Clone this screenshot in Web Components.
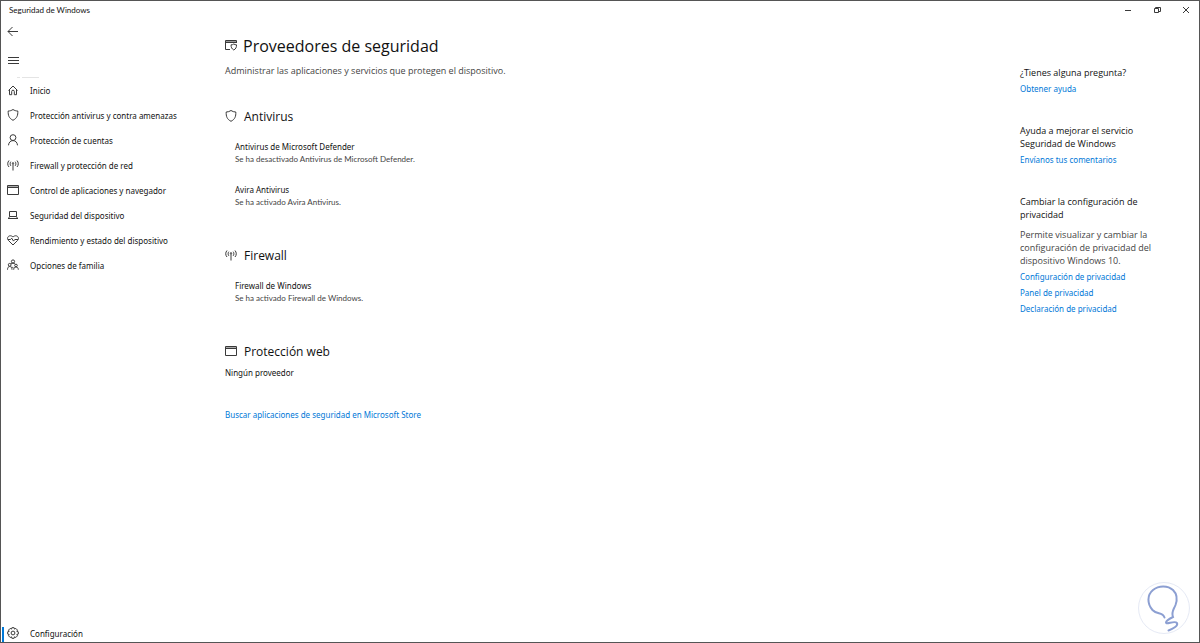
<!DOCTYPE html>
<html lang="es">
<head>
<meta charset="utf-8">
<meta name="viewport" content="width=device-width">
<title>Seguridad de Windows</title>
<style>
  html { height: 100%; }
  body {
    margin: 0; min-height: 100%; display: flex;
    background: #fff; color: #111;
    --ui: "Noto Sans", "Open Sans", sans-serif;
    --text: "Open Sans", "Noto Sans", sans-serif;
    --small: Lato, "Open Sans", sans-serif;
    --link: #0078d7; --muted: #444;
    font: 8px/12px var(--ui);
  }
</style>
</head>
<body>
<security-app></security-app>
<script>
const ICONS = {
  home: '<path d="M2.500 7.500 7 3l4.500 4.500M3.500 6.700v5h2.200V8.500a1.300 1.300 0 0 1 2.600 0v3.200h2.200v-5"/>',
  shield: '<path d="M7 1.500c1.500 1 3 1.500 4.800 1.500.2 4.300-.7 7.200-4.800 9.300C2.900 10.200 2 7.300 2.200 3 4 3 5.500 2.500 7 1.500z"/>',
  user: '<circle cx="7" cy="4.600" r="2.900"/><path d="M2.500 12.300c.2-2.700 1.800-4.700 4.500-4.700s4.300 2 4.500 4.700"/>',
  signal: '<path d="M3 2.500c-1.700 1.900-1.700 4.600 0 6.500M4.800 3.700c-.9 1.300-.9 2.800 0 4.100M11 2.500c1.700 1.900 1.700 4.600 0 6.500M9.200 3.700c.9 1.300.9 2.800 0 4.100M7 6v6.500"/><circle cx="7" cy="5.300" r=".7"/>',
  window: '<path d="M1.500 2.500h11v9h-11zM1.500 4.500h11"/><path d="M2 3.500h10" stroke="#aaa"/>',
  laptop: '<path d="M3.500 3.500h7v5h-7zM2 10.500h10M3.500 8.500l-1 2M10.500 8.500l1 2"/>',
  heart: '<path d="M7 12 2.300 7.300C-.1 4.500 3.700.8 7 4c3.300-3.200 7.100.5 4.700 3.300zM2 6.500h2.500l1.200-1.300 1.800 2.900 1.300-1.600H12"/>',
  family: '<circle cx="7" cy="3.500" r="1.600"/><circle cx="3.700" cy="6.800" r="1.400"/><circle cx="10" cy="7.500" r="1.300"/><path d="M1.500 11.700c0-2 .8-3.200 2.200-3.200S6 9.700 6 11.700M7.700 11.700c0-1.800.9-2.700 2.300-2.700s2.300.9 2.300 2.700M4.800 5.900C5.800 4.900 8.200 4.900 9 6M6 8.700l1.500 1.500"/>',
  gear: '<circle cx="7" cy="7" r="1.900"/><path d="m5.900 1.700 2.200 0 .4 1.400 1.300-.7 1.700 1.700-.7 1.300 1.500.4v2.300l-1.500.4.7 1.300-1.700 1.700-1.300-.7-.4 1.500H5.900l-.4-1.500-1.300.7-1.700-1.700.7-1.300-1.500-.4V5.800l1.500-.4-.7-1.300 1.700-1.700 1.300.7z"/>',
  provider: '<path d="M6 11.500H1.500v-9h11V5M1.500 4.500h11"/><path d="M2 3.500h10" stroke="#999"/><path d="M9.800 6c.8.600 1.700.8 2.700.8.100 2.500-.6 4-2.700 5.200C7.700 10.800 7 9.300 7.100 6.800c1 0 1.900-.2 2.700-.8z"/>',
  back: '<path d="M12 7.500H2M6.500 3 2 7.500 6.500 12"/>',
  menu: '<path d="M2 4.500h11M2 7.500h11M2 10.500h11"/>',
  minimize: '<path d="M4 7.500h6"/>',
  restore: '<path d="M4.500 5.500h4v4h-4zM5.500 5.500v-1h5v4h-2"/>',
  close: '<path d="m4 4 6 6M10 4l-6 6"/>'
};

function define(name, css, html) {
  customElements.define(name, class extends HTMLElement {
    constructor() {
      super();
      const t = document.createElement('template');
      t.innerHTML = `<style>*{box-sizing:border-box}${css}</style>${typeof html === 'function' ? html(this) : html}`;
      this.attachShadow({ mode: 'open' }).append(t.content.cloneNode(true));
    }
  });
}

define('ui-icon',
  ':host{display:block;flex:none;width:13px;height:14px}svg{display:block;width:100%;height:100%;fill:none;stroke:#3a3a3a;stroke-width:1}',
  el => `<svg viewBox="1 1 13 14" aria-hidden="true">${ICONS[el.getAttribute('name')]}</svg>`);

define('icon-button',
  ':host{display:block}button{display:flex;align-items:center;justify-content:center;width:100%;height:100%;padding:var(--button-padding,0);border:0;background:none}',
  el => `<button type="button" aria-label="${el.getAttribute('label')}"><ui-icon name="${el.getAttribute('icon')}"></ui-icon></button>`);

define('text-link',
  ':host{display:block}a{color:var(--link);text-decoration:none}',
  '<a href="#"><slot></slot></a>');

define('title-bar', `
  :host{display:flex;align-items:center;justify-content:space-between;height:18px;padding-left:8px;font-family:var(--small)}
  div{display:flex;height:100%;--button-padding:2px 0 0 4px}
  icon-button{width:29px}`,
  `<span>Seguridad de Windows</span>
   <div><icon-button icon="minimize" label="Minimizar"></icon-button><icon-button icon="restore" label="Restaurar"></icon-button><icon-button icon="close" label="Cerrar"></icon-button></div>`);

define('nav-item', `
  :host{display:block;height:25px}
  :host([current]){height:16px}
  a{display:flex;align-items:center;gap:10px;height:100%;padding-left:6px;color:inherit;text-decoration:none}
  :host([current]) a{padding-left:1px}
  :host([current]) a::before{content:"";width:2px;height:15px;margin-right:-7px;background:var(--link)}`,
  el => `<a href="#"${el.hasAttribute('current') ? ' aria-current="page"' : ''}><ui-icon name="${el.getAttribute('icon')}"></ui-icon><slot></slot></a>`);

define('side-nav', `
  :host{display:flex;flex-direction:column}
  icon-button{width:25px;height:26px}
  icon-button+icon-button{margin-top:3px}
  svg{display:block;width:24px;height:2px;margin:2px 0 0 15px;stroke:#e4e4e4}
  nav{display:flex;flex-direction:column;flex:1}
  nav-item[current]{margin-top:auto}`,
  `<icon-button icon="back" label="Atrás"></icon-button>
   <icon-button icon="menu" label="Menú"></icon-button>
   <svg viewBox="0 0 24 2" aria-hidden="true"><path d="M1 1.500h3M6 1.500h17"/></svg>
   <nav aria-label="Principal">
    <nav-item icon="home">Inicio</nav-item>
    <nav-item icon="shield">Protección antivirus y contra amenazas</nav-item>
    <nav-item icon="user">Protección de cuentas</nav-item>
    <nav-item icon="signal">Firewall y protección de red</nav-item>
    <nav-item icon="window">Control de aplicaciones y navegador</nav-item>
    <nav-item icon="laptop">Seguridad del dispositivo</nav-item>
    <nav-item icon="heart">Rendimiento y estado del dispositivo</nav-item>
    <nav-item icon="family">Opciones de familia</nav-item>
    <nav-item icon="gear" current>Configuración</nav-item>
   </nav>`);

define('provider-item', `
  :host{display:block;padding-left:10px}
  h3,p{margin:0;font-size:8px;font-weight:400}
  p{font-family:var(--small);color:var(--muted)}`,
  '<h3><slot name="name"></slot></h3><p><slot></slot></p>');

define('provider-section', `
  :host{display:block}
  h2{display:flex;align-items:center;gap:6px;margin:0 0 15px;font:400 12px/18px var(--text)}
  :host([compact]) h2{margin-bottom:6px}
  div{display:flex;flex-direction:column;gap:19px}`,
  el => `<h2><ui-icon name="${el.getAttribute('icon')}"></ui-icon>${el.getAttribute('heading')}</h2><div><slot></slot></div>`);

define('providers-page', `
  :host{display:block;padding:14px 24px 24px 0}
  h1{display:flex;align-items:center;gap:5px;margin:0;font:400 16px/26px var(--text)}
  .lead{margin:5px 0 30px;font:9px/14px var(--text);color:var(--muted)}
  .list{display:flex;flex-direction:column;gap:39px;margin-bottom:30px}`,
  `<h1><ui-icon name="provider"></ui-icon>Proveedores de seguridad</h1>
   <p class="lead">Administrar las aplicaciones y servicios que protegen el dispositivo.</p>
   <div class="list">
    <provider-section icon="shield" heading="Antivirus">
      <provider-item><span slot="name">Antivirus de Microsoft Defender</span>Se ha desactivado Antivirus de Microsoft Defender.</provider-item>
      <provider-item><span slot="name">Avira Antivirus</span>Se ha activado Avira Antivirus.</provider-item>
    </provider-section>
    <provider-section icon="signal" heading="Firewall">
      <provider-item><span slot="name">Firewall de Windows</span>Se ha activado Firewall de Windows.</provider-item>
    </provider-section>
    <provider-section icon="window" heading="Protección web" compact>Ningún proveedor</provider-section>
   </div>
   <text-link>Buscar aplicaciones de seguridad en Microsoft Store</text-link>`);

define('help-group', `
  :host{display:flex;flex-direction:column;gap:4px}
  h2{margin:0;font:400 9px/13px var(--text)}`,
  el => `<h2>${el.getAttribute('heading')}</h2><slot></slot>`);

define('help-panel', `
  :host{display:flex;flex-direction:column;gap:29px;padding:47px 40px 0 0}
  p{margin:3px 0 0;font:9px/13px var(--text);color:var(--muted)}`,
  `<help-group heading="¿Tienes alguna pregunta?"><text-link>Obtener ayuda</text-link></help-group>
   <help-group heading="Ayuda a mejorar el servicio Seguridad de Windows"><text-link>Envíanos tus comentarios</text-link></help-group>
   <help-group heading="Cambiar la configuración de privacidad">
     <p>Permite visualizar y cambiar la configuración de privacidad del dispositivo Windows 10.</p>
     <text-link>Configuración de privacidad</text-link>
     <text-link>Panel de privacidad</text-link>
     <text-link>Declaración de privacidad</text-link>
   </help-group>`);

define('bulb-badge', `
  :host{display:block;width:54px;height:54px}
  svg{display:block;fill:none;stroke-linecap:round}`,
  `<svg viewBox="0 0 54 54" aria-hidden="true"><circle cx="27" cy="27" r="25.500" stroke="#e6eaf5"/>
   <path d="M27.500 36.500c-2-6-7.500-2.500-12-7.500C10 22.500 10 14 16 9c6-5 15-4.500 20 0 4 4 4.500 9.500 2.500 15-2 5-4.500 7-2.500 12-3 1.500-7 3.500-7 5.500 0 2.500 9-2.500 11 .5 1.500 3-4.500 6-8.500 7.500" stroke="#8c9fd2" stroke-width="2"/></svg>`);

define('security-app', `
  :host{display:grid;grid-template:auto 1fr/224px 1fr 179px;flex:1;box-sizing:border-box;position:relative;border:1px solid #555;background:#fff}
  title-bar{grid-column:1/-1}
  bulb-badge{position:absolute;right:8px;bottom:7px}`,
  '<title-bar></title-bar><side-nav></side-nav><providers-page role="main"></providers-page><help-panel role="complementary"></help-panel><bulb-badge></bulb-badge>');
</script>
</body>
</html>
